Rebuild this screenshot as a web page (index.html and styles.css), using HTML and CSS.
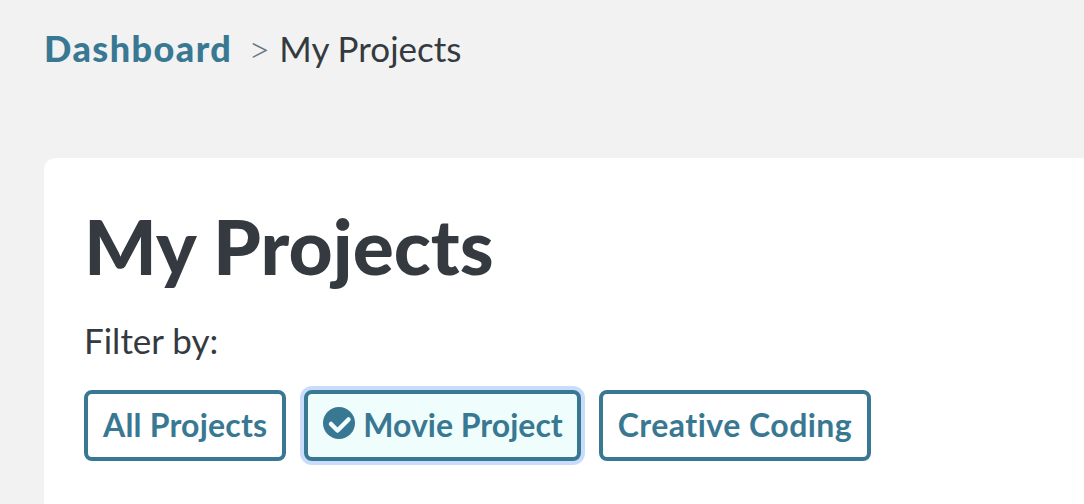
FILE: index.html
```html
<!DOCTYPE html>
<html lang="en">

<head>
    <meta charset="UTF-8">
    <title>My Projects</title>
    <link rel="stylesheet" href="styles.css">
</head>

<body>
    <nav class="breadcrumb">
        <a href="#" class="crumb-link">Dashboard</a>
        <span class="crumb-sep">&gt;</span>
        <span class="crumb-current">My Projects</span>
    </nav>

    <main class="card">
        <h1>My Projects</h1>
        <p class="filter-label">Filter by:</p>
        <div class="filters">
            <button class="filter">All Projects</button>
            <button class="filter active">
                <svg class="check" viewBox="0 0 32 32" aria-hidden="true">
                    <circle cx="16" cy="16" r="16" fill="#387893"></circle>
                    <path d="M8 17l6.5 6.5L25.5 12.5" fill="none" stroke="#f0fdfd" stroke-width="4.5" stroke-linecap="round" stroke-linejoin="round"></path>
                </svg>
                Movie Project
            </button>
            <button class="filter wide">Creative Coding</button>
        </div>
    </main>
</body>

</html>
```

FILE: styles.css
```css
body {
    margin: 0;
    height: 504px;
    overflow: hidden;
    background-color: #f2f2f2;
    font-family: Lato, "Liberation Sans", sans-serif;
    color: #343a40;
}

.breadcrumb {
    display: flex;
    align-items: center;
    height: 44px;
    padding: 26px 0 0 44px;
    font-size: 35px;
}

.crumb-link {
    color: #387893;
    font-size: 36px;
    font-weight: 900;
    letter-spacing: 1.45px;
    text-decoration: none;
}

.crumb-sep {
    margin-left: 16px;
    color: #6c757d;
    font-size: 38px;
    font-weight: 300;
}

.crumb-current {
    margin-left: 9px;
}

.card {
    box-sizing: border-box;
    height: 346px;
    margin: 88px 0 0 44px;
    padding: 40px;
    background-color: #fff;
    border-radius: 12px 0 0 0;
}

h1 {
    margin: 0;
    font-size: 76.6px;
    line-height: 94px;
    font-weight: 900;
}

.filter-label {
    margin: 24px 0 0;
    font-size: 35px;
    line-height: 48px;
}

.filters {
    display: flex;
    gap: 18px;
    margin-top: 26px;
}

.filter {
    display: flex;
    align-items: center;
    gap: 8px;
    height: 71px;
    padding: 0 15px 3px;
    background-color: #fff;
    border: 4px solid #387893;
    border-radius: 8px;
    color: #387893;
    font-family: inherit;
    font-size: 32px;
    font-weight: 700;
    letter-spacing: 0.2px;
}

.filter.active {
    padding-right: 14px;
    background-color: #f0fdfd;
    box-shadow: 0 0 0 4px #c9dcfb;
    letter-spacing: 0;
}

.filter.wide {
    letter-spacing: 0.47px;
}

.check {
    width: 32px;
    height: 32px;
    margin-top: -3px;
}
```
